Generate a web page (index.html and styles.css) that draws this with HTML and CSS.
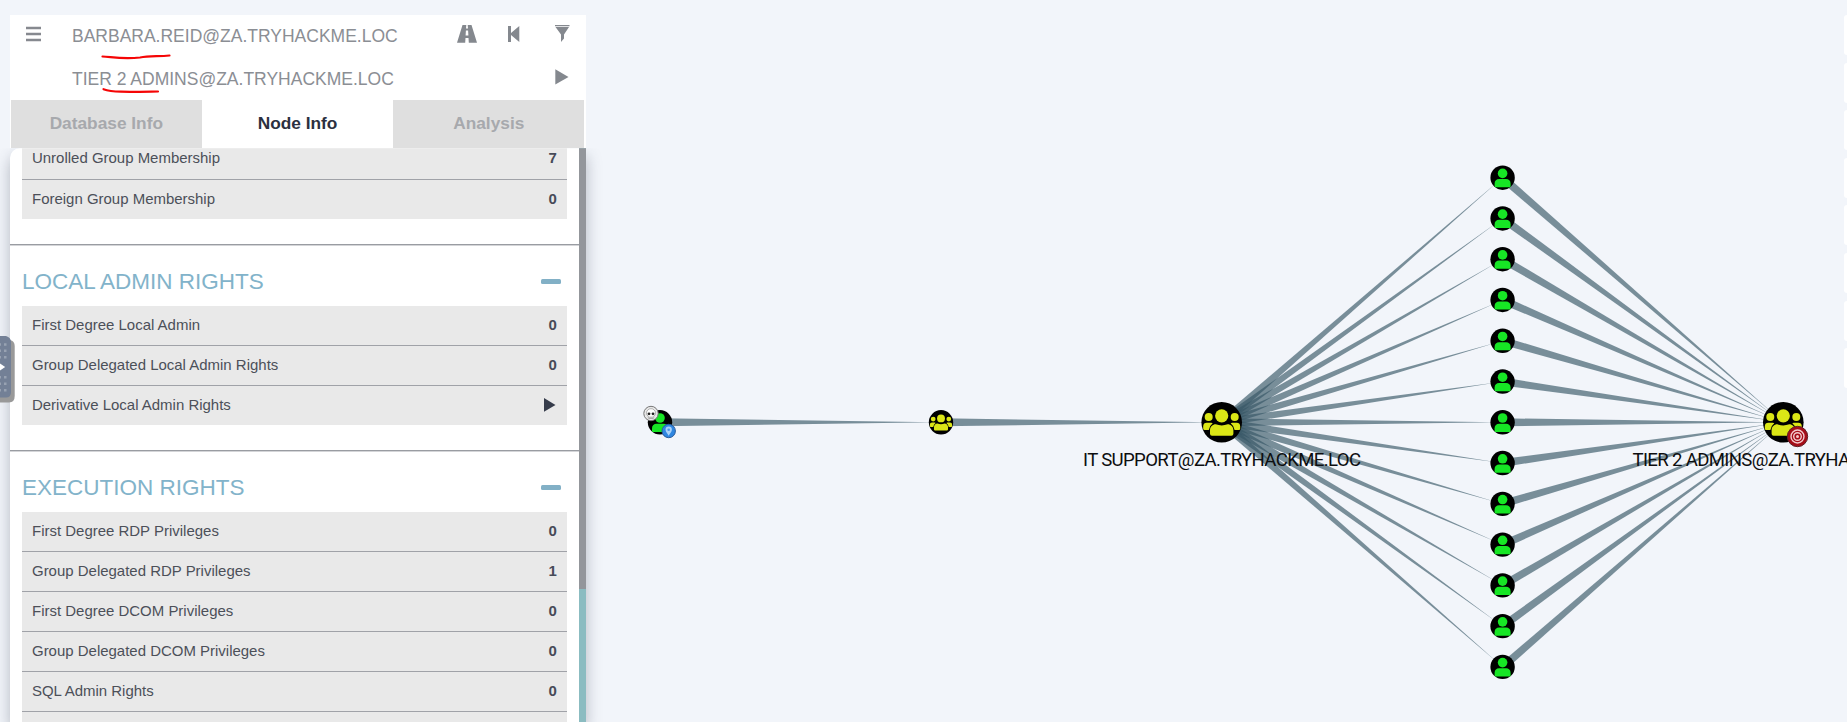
FILE: index.html
```html
<!DOCTYPE html>
<html lang="en">
<head>
<meta charset="utf-8">
<title>Graph explorer</title>
<link rel="stylesheet" href="styles.css">
</head>
<body>
<svg class="graph" viewBox="0 0 1847 722" id="graph">
  <defs>
    <g id="user">
      <circle r="12.2" fill="#000"/>
      <g fill="#17e625"><circle cy="-4.3" r="4.8"/><path d="M-8 8.6V6C-8 3-6 1.4-3.5 1.4H3.5C6 1.4 8 3 8 6V8.6Q8 9.6 7 9.6H-7Q-8 9.6-8 8.6Z"/></g>
    </g>
    <g id="group">
      <circle r="20.3" fill="#000"/>
      <g fill="#dbe616">
        <circle cx="-13" cy="-5.3" r="4"/><circle cx="13" cy="-5.3" r="4"/>
        <path d="M-18.5 6.5V4C-18.5 1.5-17 .4-15 .4H-10.5Q-9.5 .4-9 1Q-12.3 3.5-12.9 7.8H-17Q-18.5 7.8-18.5 6.5Z"/>
        <path d="M18.5 6.5V4C18.5 1.5 17 .4 15 .4H10.5Q9.5 .4 9 1Q12.3 3.5 12.9 7.8H17Q18.5 7.8 18.5 6.5Z"/>
        <circle cy="-6.5" r="6.6"/>
        <path d="M-11.7 11.5V8C-11.7 4.5-9 2-6 2Q0 4.3 6 2C9 2 11.7 4.5 11.7 8V11.5Q11.7 13.5 9.7 13.5H-9.7Q-11.7 13.5-11.7 11.5Z"/>
      </g>
    </g>
  </defs>
  <g id="edges" class="edges"></g>
  <g id="nodes"></g>
  <use href="#user" x="660" y="422.3"/>
  <g transform="translate(651 413.5)">
    <circle r="7.2" fill="#e8e8e8" stroke="#777" stroke-width="1"/>
    <path d="M-4.5-.5a4.5 4.3 0 0 1 9 0Q4.5 2 2.7 2.6V4.8H-2.7V2.6Q-4.5 2-4.5-.5Z" fill="#fff" stroke="#888" stroke-width=".6"/>
    <circle cx="-2" cy=".3" r="1.4" fill="#222"/><circle cx="2" cy=".3" r="1.4" fill="#222"/>
    <path d="M-1 3v2M1 3v2" stroke="#444" stroke-width=".6"/>
  </g>
  <g transform="translate(668.7 431)">
    <circle r="6.7" fill="#2f86e0" stroke="#2a5c9a" stroke-width="1"/>
    <path d="M0 4.8C-1 2.5-3.2 1-3.2-1.2a3.2 3.2 0 0 1 6.4 0C3.2 1 1 2.5 0 4.8Z" fill="#a9d2f8"/>
    <circle cy="-1.2" r="1.3" fill="#4a98e8"/>
  </g>
  <use href="#group" transform="translate(941 422.3) scale(.6)"/>
  <use href="#group" x="1221.7" y="422.3"/>
  <use href="#group" x="1783.3" y="422.3"/>
  <g transform="translate(1797.5 436.5)">
    <circle r="10.2" fill="#a50d18" stroke="#5f2228" stroke-width="1"/>
    <g fill="none" stroke="#f3c9cc" stroke-width="1.4"><circle r="6.5"/><circle r="3.8"/></g>
    <circle r="1.5" fill="#f3c9cc"/>
  </g>
  <text class="label" x="1083" y="466" textLength="278">IT SUPPORT@ZA.TRYHACKME.LOC</text>
  <text class="label" x="1632.5" y="466" textLength="302">TIER 2 ADMINS@ZA.TRYHACKME.LOC</text>
</svg>

<aside class="panel">
  <div class="search">
    <div class="search-row">
      <svg class="menu" width="16" height="18"><path d="M0 3h15M0 9h15M0 15h15" stroke="#86898f" stroke-width="2.7"/></svg>
      <span class="query">BARBARA.REID@ZA.TRYHACKME.LOC</span>
      <div class="icons">
        <svg width="20" height="18" viewBox="0 0 20 18"><path d="M5.5 0H9.3L9 3.5H11L10.7 0H14.5L20 17.7H11.8L11.5 13H8.5L8.2 17.7H0ZM8.9 5.5 8.6 10.5H11.4L11.1 5.5Z" fill="#84888e" fill-rule="evenodd"/></svg>
        <svg width="12" height="18" viewBox="0 0 12 18"><path d="M0 1H3V8L11.3 1V17L3 10V17H0Z" fill="#84888e"/></svg>
        <svg width="15" height="18" viewBox="0 0 15 18"><path d="M0 0H14.5V1.2H0ZM.5 2H14L9 9.5V13.5L6 17V9.5Z" fill="#84888e"/></svg>
      </div>
    </div>
    <div class="search-row second">
      <span class="query">TIER 2 ADMINS@ZA.TRYHACKME.LOC</span>
      <svg class="play" width="14" height="16"><path d="M.3.3 13.5 8 .3 15.5Z" fill="#84888e"/></svg>
    </div>
    <svg class="marks" width="90" height="50" viewBox="95 50 90 50"><path d="M102.5 56.5C112 57 123 59.5 140 57.5C149 56 158 56.5 169.5 55.5M103.5 89.2C113 92.5 127 92 158 91.5"/></svg>
  </div>
  <nav class="tabs">
    <div class="tab">Database Info</div>
    <div class="tab active">Node Info</div>
    <div class="tab">Analysis</div>
  </nav>
  <div class="body">
    <div class="content">
      <section class="section">
        <div class="list">
          <div class="row cut"><span>Unrolled Group Membership</span><b>7</b></div>
          <div class="row"><span>Foreign Group Membership</span><b>0</b></div>
        </div>
      </section>
      <section class="section">
        <h2 class="heading">LOCAL ADMIN RIGHTS<i class="minus"></i></h2>
        <div class="list">
          <div class="row"><span>First Degree Local Admin</span><b>0</b></div>
          <div class="row"><span>Group Delegated Local Admin Rights</span><b>0</b></div>
          <div class="row"><span>Derivative Local Admin Rights</span><svg class="go" width="12" height="14"><path d="M0 0 11.5 7 0 13.8Z" fill="#363c4b"/></svg></div>
        </div>
      </section>
      <section class="section">
        <h2 class="heading">EXECUTION RIGHTS<i class="minus"></i></h2>
        <div class="list">
          <div class="row"><span>First Degree RDP Privileges</span><b>0</b></div>
          <div class="row"><span>Group Delegated RDP Privileges</span><b>1</b></div>
          <div class="row"><span>First Degree DCOM Privileges</span><b>0</b></div>
          <div class="row"><span>Group Delegated DCOM Privileges</span><b>0</b></div>
          <div class="row"><span>SQL Admin Rights</span><b>0</b></div>
          <div class="row"></div>
        </div>
      </section>
    </div>
    <div class="scrollbar"><div class="thumb"></div></div>
  </div>
</aside>

<svg class="handle" width="16" height="70" viewBox="0 0 16 70">
  <path d="M0 4H10Q14.7 5 14.7 10V60Q14.7 66.5 9 66.5H0Z" fill="#999"/>
  <path d="M0 0H6Q11 1.5 11 6V56Q11 61.5 6 61.5H0Z" fill="#738096"/>
  <path d="M0 27.5 5.2 31 0 34.5Z" fill="#fff"/>
  <g fill="#98a2b2"><path d="M4 7.3h2.5v2.5H4zM4 13.5h2.5v2.5H4zM4 20h2.5v2.5H4zM4 40h2.5v2.5H4zM4 46.5h2.5v2.5H4zM4 53h2.5v2.5H4z"/><path d="M0 7.3h1v2.5H0zM0 13.5h1v2.5H0zM0 20h1v2.5H0zM0 40h1v2.5H0zM0 46.5h1v2.5H0zM0 53h1v2.5H0z"/></g>
</svg>

<div class="tools"><i></i><i></i><i></i><i></i><i></i><i></i><i></i><i></i></div>
<script src="graph.js"></script>
</body>
</html>
```

FILE: styles.css
```css
* { box-sizing: border-box; }
body {
  margin: 0;
  width: 1847px;
  height: 722px;
  overflow: hidden;
  position: relative;
  background: #f2f5fa;
  font-family: "Liberation Sans", Arial, sans-serif;
  color: #4c5059;
}
.graph { position: absolute; inset: 0; width: 1847px; height: 722px; }
.edges { fill: #355666; fill-opacity: .65; }
.label { font: 18.6px Roboto, sans-serif; fill: #0d0e10; }

.panel {
  position: relative;
  width: 576px;
  height: 707px;
  margin: 15px 0 0 9.7px;
  display: flex;
  flex-direction: column;
}
.search { position: relative; height: 85px; background: #fff; color: #8b8e94; }
.search-row { display: flex; align-items: center; height: 42px; padding: 0 15.6px 0 16px; }
.menu { margin-top: -5px; }
.query { font-size: 17.5px; line-height: 20px; margin: 0 0 0 30.3px; white-space: nowrap; }
.icons { display: flex; align-items: center; gap: 31px; margin: -4px 0 0 auto; }
.icons svg:last-child { margin-left: 4px; }
.second .query { margin-left: 46.3px; margin-top: 2px; }
.play { margin: -3px 1px 0 auto; }
.marks { position: absolute; left: 85.3px; top: 35px; fill: none; stroke: #f50505; stroke-width: 2.2; stroke-linecap: round; }

.tabs { display: flex; height: 48.3px; padding: 0 1.3px 0 1px; background: #fff; }
.tab {
  flex: 1;
  display: flex;
  align-items: center;
  justify-content: center;
  padding-bottom: 1px;
  background: #dfdfdf;
  color: #a7a9ad;
  font-size: 17.3px;
  font-weight: bold;
}
.tab.active { background: #fff; color: #2b3040; }

.body {
  flex: 1;
  min-height: 0;
  display: flex;
  background: #fff;
  border-radius: 10px 0 0 0;
  box-shadow: 0 8px 15px rgba(60, 70, 90, .35);
  clip-path: inset(0 -30px 0 -30px);
}
.content { flex: 1; overflow: hidden; }
.section { padding: 0 12.3px 24.8px; border-bottom: 1px solid #999ca2; box-shadow: 0 1px #d4d5d8; }
.section:first-child { padding-bottom: 25.3px; }
.heading {
  display: flex;
  align-items: center;
  justify-content: space-between;
  height: 61.4px;
  margin: 0;
  padding: 12px 6px 0 0;
  font-size: 22.5px;
  font-weight: normal;
  color: #82b3ca;
}
.minus { width: 20px; height: 5px; border-radius: 1.5px; background: #82b0c6; margin-top: -1px; }
.row {
  display: flex;
  align-items: center;
  justify-content: space-between;
  height: 40px;
  padding: 0 10px 1px;
  background: #e9e9e9;
  border-bottom: 1px solid #a0a2a8;
  font-size: 14.98px;
  line-height: 18px;
}
.row:last-child { height: 39px; border-bottom: 0; }
.row.cut { height: 31.3px; padding-bottom: 11px; }
.row b { color: #474b58; }
.go { margin-right: 0.5px; }
.scrollbar { width: 6.5px; background: #8bbcc1; }
.thumb { height: 440.5px; background: #93969b; }

.handle { position: absolute; left: 0; top: 336px; }
.tools { position: absolute; right: 0; top: 15px; width: 3px; display: flex; flex-direction: column; gap: 7.6px; }
.tools i { height: 40px; background: #fff; border-radius: 4px 0 0 4px; }
```

FILE: graph.js
```js
const NS = 'http://www.w3.org/2000/svg';
const edges = document.getElementById('edges');
const nodes = document.getElementById('nodes');

// Edges taper from the source to a point at the rim of the target.
function edge(x1, y1, x2, y2, radius) {
  const dx = x2 - x1, dy = y2 - y1, len = Math.hypot(dx, dy);
  const nx = -dy / len * 4, ny = dx / len * 4;
  const tx = x2 - dx / len * radius * 0.5, ty = y2 - dy / len * radius * 0.5;
  const p = document.createElementNS(NS, 'polygon');
  p.setAttribute('points', `${x1 + nx},${y1 + ny} ${tx},${ty} ${x1 - nx},${y1 - ny}`);
  edges.appendChild(p);
}

edge(660, 422.3, 941, 422.3, 12);
edge(941, 422.3, 1221.7, 422.3, 20);
for (let i = 0; i < 13; i++) {
  const y = 422.3 + (i - 6) * 40.77;
  edge(1221.7, 422.3, 1502.6, y, 12);
  edge(1502.6, y, 1783.3, 422.3, 20);
  const u = document.createElementNS(NS, 'use');
  u.setAttribute('href', '#user');
  u.setAttribute('x', 1502.6);
  u.setAttribute('y', y);
  nodes.appendChild(u);
}
```
